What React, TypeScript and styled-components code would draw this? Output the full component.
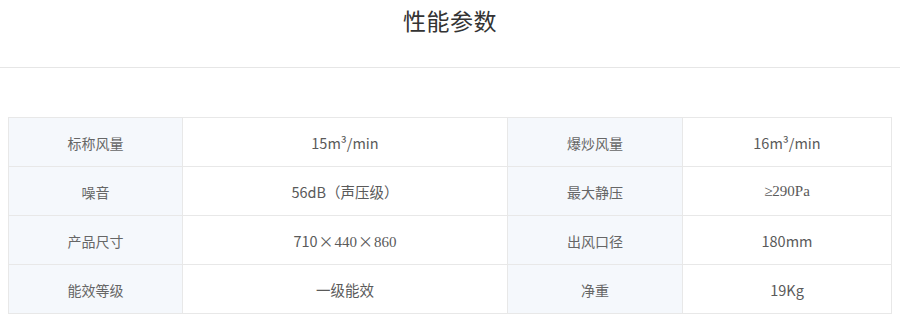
import React from "react";
import styled, { createGlobalStyle } from "styled-components";

const Global = createGlobalStyle`
  html, body { margin: 0; padding: 0; background: #fff; }
  body { font-family: "Noto Sans CJK SC", "Noto Sans", sans-serif; }
`;

const Page = styled.div`
  width: 900px;
`;

const Header = styled.div`
  height: 67px;
  border-bottom: 1px solid #e6e6e6;
  display: flex;
  justify-content: center;
`;

const Title = styled.h2`
  margin: 0;
  padding-top: 3px;
  font-size: 23px;
  font-weight: 400;
  line-height: 34px;
  color: #333;
  letter-spacing: 0.5px;
`;

const Table = styled.div`
  margin: 49px 0 0 8px;
  display: grid;
  grid-template-columns: 174px 325px 175px 209px;
  border-top: 1px solid #e8e8e8;
  border-left: 1px solid #e8e8e8;
  width: 884px;
  box-sizing: border-box;
`;

const Cell = styled.div<{ $label?: boolean }>`
  border-right: 1px solid #e8e8e8;
  border-bottom: 1px solid #e8e8e8;
  background: ${(p) => (p.$label ? "#f5f8fc" : "#fff")};
  display: flex;
  align-items: center;
  justify-content: center;
  font-size: 14px;
  color: #666;
  padding-top: 1px;
  box-sizing: content-box;
  height: 47px;
`;

const Value = styled.span`
  font-size: 14.5px;
  color: #5a5a5a;
`;

const Serif = styled.span`
  font-family: "Liberation Serif", "Noto Sans CJK SC", serif;
  font-size: 15px;
  color: #5a5a5a;
`;

const Times = styled.span`
  font-family: "Noto Sans CJK SC", sans-serif;
  font-size: 15px;
  color: #5a5a5a;
  margin: 0 1px;
`;

const rows: [string, React.ReactNode, string, React.ReactNode][] = [
  ["标称风量", <Value>15m³/min</Value>, "爆炒风量", <Value>16m³/min</Value>],
  ["噪音", <Value>56dB（声压级）</Value>, "最大静压", <Serif>≥290Pa</Serif>],
  [
    "产品尺寸",
    <span>
      <Value>710</Value>
      <Times>×</Times>
      <Serif>440</Serif>
      <Times>×</Times>
      <Serif>860</Serif>
    </span>,
    "出风口径",
    <Value>180mm</Value>,
  ],
  ["能效等级", <Value>一级能效</Value>, "净重", <Value>19Kg</Value>],
];

export default function App() {
  return (
    <Page>
      <Global />
      <Header>
        <Title>性能参数</Title>
      </Header>
      <Table>
        {rows.map((r, i) => (
          <React.Fragment key={i}>
            <Cell $label>{r[0]}</Cell>
            <Cell>{r[1]}</Cell>
            <Cell $label>{r[2]}</Cell>
            <Cell>{r[3]}</Cell>
          </React.Fragment>
        ))}
      </Table>
    </Page>
  );
}
